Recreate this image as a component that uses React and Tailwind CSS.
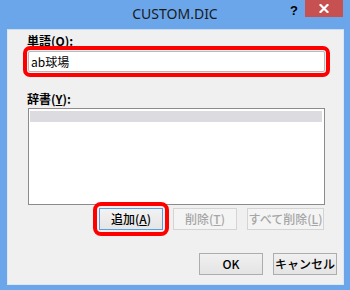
import React from "react";

const jp = { fontFamily: '"Noto Sans CJK JP", "Noto Sans", sans-serif' };

function Btn({ children, w, variant = "normal" }) {
  const base =
    "h-[22px] flex items-center justify-center text-[12px] leading-none border font-medium";
  const cls =
    variant === "focus"
      ? "border-[#5a9fe0] bg-gradient-to-b from-[#f2f2f2] to-[#e6e6e6] text-black"
      : variant === "disabled"
      ? "border-[#d4d4d4] bg-[#f4f4f4] text-[#a6a6a6]"
      : "border-[#adadad] bg-gradient-to-b from-[#f0f0f0] to-[#e4e4e4] text-black";
  return (
    <div className={`${base} ${cls} ${w}`} style={jp}>
      {children}
    </div>
  );
}

export default function App() {
  return (
    <div className="w-[350px] h-[290px] bg-[#6ba6ea] flex flex-col overflow-hidden">
      {/* title bar */}
      <div className="h-[29px] relative flex items-start justify-center shrink-0">
        <div
          className="mt-[5px] text-[14px] leading-[18px] text-[#1a1a1a]"
          style={{ fontFamily: '"Noto Sans", sans-serif' }}
        >
          CUSTOM.DIC
        </div>
        <div
          className="absolute left-[290px] top-[3px] text-[13px] font-bold leading-[16px] text-black"
          style={{ fontFamily: '"Liberation Sans", sans-serif' }}
        >
          ?
        </div>
        <div className="absolute right-[7px] top-0 w-[38px] h-[17px] bg-[#c75050] flex items-center justify-center">
          <svg width="10" height="9" viewBox="0 0 10 9">
            <path d="M1.5 1 L8.5 8 M8.5 1 L1.5 8" stroke="white" strokeWidth="2.2" strokeLinecap="square" />
          </svg>
        </div>
      </div>

      {/* client area */}
      <div className="flex-1 ml-[7px] mr-[6px] mb-[5px] bg-[#f0f0f0] border border-[#dbe7f5] border-t-[#c9dcf2] flex flex-col">
        <div className="pl-[20px] pr-[18px] pt-[3px] flex flex-col" style={jp}>
          <div className="h-[16px] leading-[16px] text-[12px] font-bold text-black -ml-[1px]">
            単語(<span className="underline underline-offset-1">O</span>):
          </div>
          <div className="mt-[2px] h-[21px] bg-white border border-[#b9b9b9] outline-4 outline-[#ff0000] outline-offset-1 rounded-[2px] flex items-center pl-[2px] text-[12px] text-black">
            ab球場
          </div>

          <div className="mt-[19px] h-[16px] leading-[16px] text-[12px] font-bold text-black -ml-[1px]">
            辞書(<span className="underline underline-offset-1">Y</span>):
          </div>
          <div className="mt-[1px] h-[97px] bg-white border border-[#8b8b8b] pt-[2px] pl-[1px] pr-[2px]">
            <div className="h-[11px] bg-[#dcdce0]" />
          </div>

          <div className="mt-[3px] flex justify-end gap-[10px] pr-[1px]">
            <div className="outline-4 outline-[#ff0000] outline-offset-[2px] rounded-[2px]">
              <Btn w="w-[64px]" variant="focus">
                追加(<span className="underline underline-offset-1">A</span>)
              </Btn>
            </div>
            <Btn w="w-[64px]" variant="disabled">
              削除(<span className="underline underline-offset-1">T</span>)
            </Btn>
            <Btn w="w-[77px]" variant="disabled">
              すべて削除(<span className="underline underline-offset-1">L</span>)
            </Btn>
          </div>
        </div>

        <div className="mt-[23px] flex justify-end gap-[10px] pr-[6px]">
          <Btn w="w-[64px]">OK</Btn>
          <Btn w="w-[64px]">キャンセル</Btn>
        </div>
      </div>
    </div>
  );
}
